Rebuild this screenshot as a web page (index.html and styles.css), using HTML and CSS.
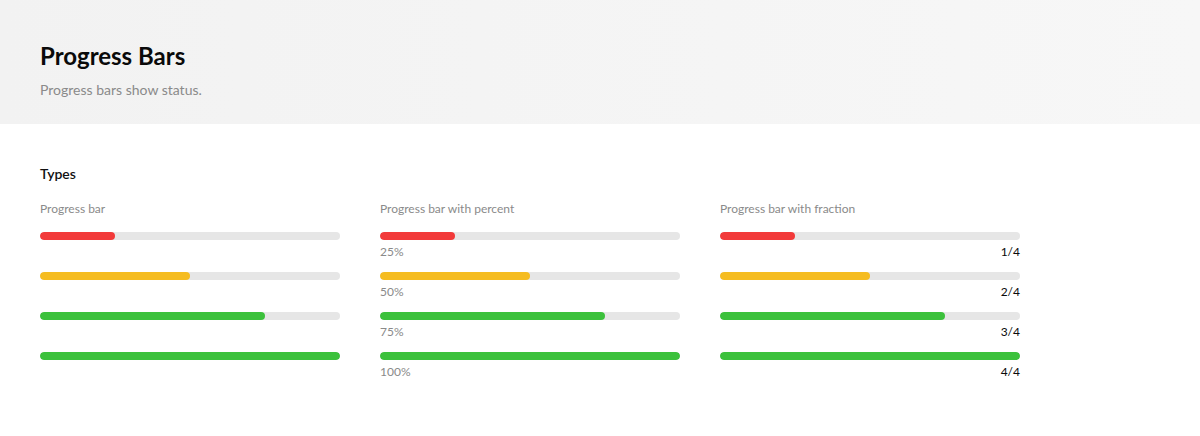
FILE: index.html
```html
<!DOCTYPE html>
<html lang="en">
<head>
<meta charset="utf-8">
<title>Progress Bars</title>
<link rel="stylesheet" href="styles.css">
</head>
<body>
<header class="page-header">
  <h1 class="page-title">Progress Bars</h1>
  <p class="page-subtitle">Progress bars show status.</p>
</header>
<main class="content">
  <h2 class="section-title">Types</h2>
  <div class="types">
    <section class="type">
      <h3 class="type-label">Progress bar</h3>
      <div class="progress"><div class="track"><div class="fill red" style="width:25%"></div></div></div>
      <div class="progress"><div class="track"><div class="fill yellow" style="width:50%"></div></div></div>
      <div class="progress"><div class="track"><div class="fill green" style="width:75%"></div></div></div>
      <div class="progress"><div class="track"><div class="fill green" style="width:100%"></div></div></div>
    </section>
    <section class="type">
      <h3 class="type-label">Progress bar with percent</h3>
      <div class="progress"><div class="track"><div class="fill red" style="width:25%"></div></div><span class="percent">25%</span></div>
      <div class="progress"><div class="track"><div class="fill yellow" style="width:50%"></div></div><span class="percent">50%</span></div>
      <div class="progress"><div class="track"><div class="fill green" style="width:75%"></div></div><span class="percent">75%</span></div>
      <div class="progress"><div class="track"><div class="fill green" style="width:100%"></div></div><span class="percent">100%</span></div>
    </section>
    <section class="type">
      <h3 class="type-label">Progress bar with fraction</h3>
      <div class="progress"><div class="track"><div class="fill red" style="width:25%"></div></div><span class="fraction">1/4</span></div>
      <div class="progress"><div class="track"><div class="fill yellow" style="width:50%"></div></div><span class="fraction">2/4</span></div>
      <div class="progress"><div class="track"><div class="fill green" style="width:75%"></div></div><span class="fraction">3/4</span></div>
      <div class="progress"><div class="track"><div class="fill green" style="width:100%"></div></div><span class="fraction">4/4</span></div>
    </section>
  </div>
</main>
</body>
</html>
```
FILE: styles.css
```css
* { box-sizing: border-box; }
html, body { margin: 0; padding: 0; }
body {
  font-family: Lato, "Noto Sans", "Liberation Sans", sans-serif;
  color: #111;
  background: #fff;
}
.page-header {
  height: 124px;
  padding: 40px 40px 0;
  background: linear-gradient(90deg, #f2f2f2 0%, #f7f7f7 100%);
}
.page-title {
  margin: 0;
  font-size: 24px;
  line-height: 32px;
  font-weight: 700;
  color: #0a0a0a;
}
.page-subtitle {
  margin: 8px 0 0;
  font-size: 14px;
  line-height: 20px;
  color: #8a8a8a;
}
.content {
  padding: 40px 40px 0;
}
.section-title {
  margin: 0;
  font-size: 14px;
  line-height: 20px;
  font-weight: 600;
  color: #111;
}
.types {
  display: flex;
  gap: 40px;
  margin-top: 17px;
}
.type {
  width: 300px;
}
.type-label {
  margin: 0 0 15px;
  font-size: 12px;
  line-height: 16px;
  font-weight: 400;
  color: #8a8a8a;
}
.progress {
  display: flex;
  flex-direction: column;
  min-height: 28px;
  margin-bottom: 12px;
}
.track {
  height: 8px;
  border-radius: 4px;
  background: #e6e6e6;
  overflow: hidden;
}
.fill {
  height: 100%;
  border-radius: 4px;
}
.red { background: #f23a3a; }
.yellow { background: #f5bc21; }
.green { background: #3cc13c; }
.percent, .fraction {
  margin-top: 4px;
  font-size: 12px;
  line-height: 16px;
}
.percent { color: #8a8a8a; }
.fraction {
  align-self: flex-end;
  color: #0a0a0a;
  font-weight: 400;
}
```
